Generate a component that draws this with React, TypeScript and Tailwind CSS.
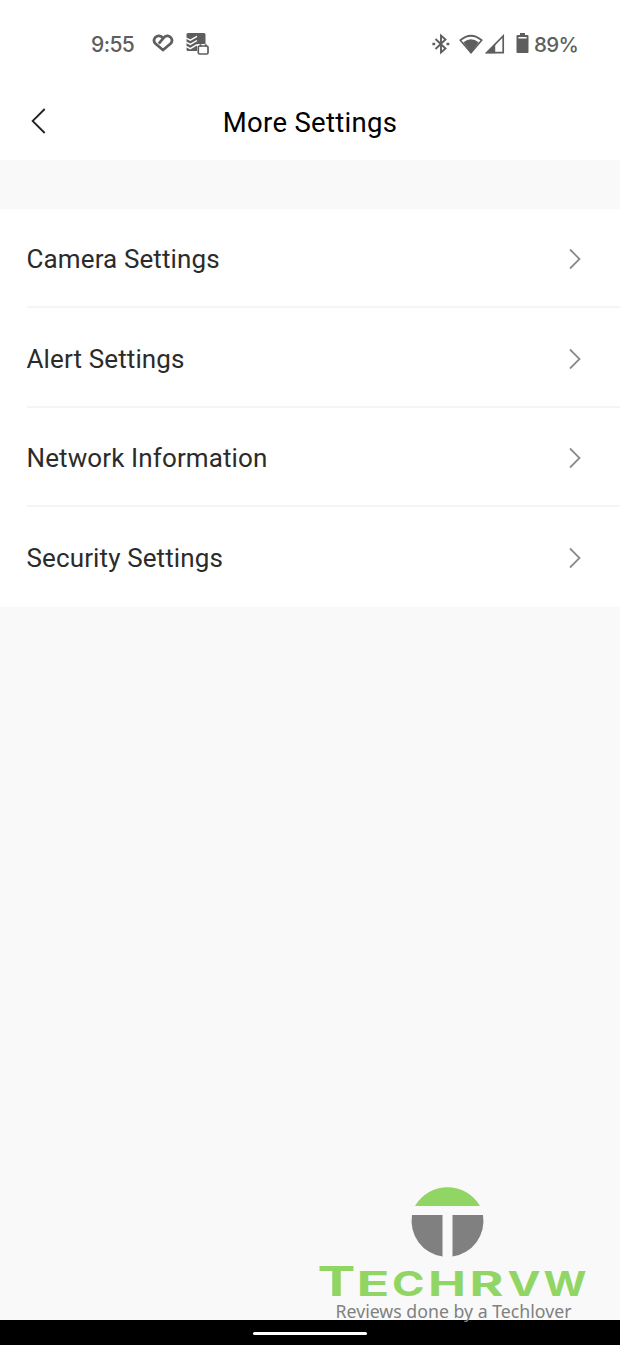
const rows = ["Camera Settings", "Alert Settings", "Network Information", "Security Settings"];

function StatusBar() {
    return (
        <div className="flex h-[86px] shrink-0 items-start justify-between pl-[91px] pr-[41px] pt-[31px] text-[#5e5e5e]">
            <div className="flex h-[27px] items-center">
                <span className="w-[61px] pt-px font-['Inter',sans-serif] text-[21px] font-medium tracking-[-0.6px]">9:55</span>
                {/* Heart with a check */}
                <svg className="mb-[3px] mr-[12px]" width="22" height="20" viewBox="0 0 22 20" fill="none" stroke="currentColor" strokeWidth="2.700">
                    <path d="M11 5C9 2.400 5.400 2.100 3.300 4.400c-1.900 2.200-1.500 4.500.3 6.300L11 17l7.400-6.300c1.800-1.800 2.200-4.100.3-6.300C16.600 2.100 13.800 2.500 12 4.400L6.800 10.600" />
                </svg>
                {/* Todo list with a badge */}
                <svg className="mb-px" width="24" height="24" viewBox="0 0 24 24">
                    <path fill="currentColor" d="M2 1h16a1.500 1.500 0 0 1 1.500 1.500V12H12v7H2a1.500 1.500 0 0 1-1.500-1.500v-15A1.500 1.500 0 0 1 2 1z" />
                    <path stroke="white" strokeWidth="1.400" fill="none" d="M0 6l4.300 2.200L11 4.300M0 10.200l4.300 2.200L11 8.500M0 14.400l4.300 2.200L11 12.700" />
                    <path d="M11 12.200h13V24H11z" fill="white" />
                    <rect x="12.300" y="14" width="9.700" height="8" rx="1.300" fill="white" stroke="currentColor" strokeWidth="1.700" />
                    <path d="M14.500 12.300v2.500M19.800 12.300v2.500" stroke="currentColor" strokeWidth="1.700" />
                </svg>
            </div>
            <div className="flex h-[27px] items-center">
                <svg className="mb-[2px] mr-[9px]" width="18" height="22" viewBox="0 0 18 22" fill="none" stroke="currentColor" strokeWidth="1.900">
                    <path d="M3.500 6l10 9.500-4.500 4V2.500l4.500 4-10 9.500" />
                    <path d="M.4 11h2.800M14.500 11h2.800" strokeWidth="2.400" />
                </svg>
                <svg className="mb-[2px] mr-[2px]" width="24" height="20" viewBox="0 0 24 20">
                    <path d="M1.300 6.200Q12-2.700 22.700 6.200L12 18.600z" fill="none" stroke="currentColor" strokeWidth="1.700" />
                    <path d="M4.400 8.300Q12 2.400 19.600 8.300L12 18.600z" fill="currentColor" />
                </svg>
                <svg className="mb-[2px] mr-[11px]" width="20" height="20" viewBox="0 0 20 20">
                    <path d="M1.800 18.600L18.200 2v16.600z" fill="none" stroke="currentColor" strokeWidth="1.700" />
                    <path d="M1 19.200L10.200 9.600v9.600z" fill="currentColor" />
                </svg>
                <svg className="mb-[3px] mr-[5px]" width="13" height="22" viewBox="0 0 13 22">
                    <path fill="currentColor" fillRule="evenodd" d="M4 1h5v2h2.500a1 1 0 0 1 1 1v16a1 1 0 0 1-1 1h-10a1 1 0 0 1-1-1V4a1 1 0 0 1 1-1H4zM2.400 5v1.400h8.200V5z" />
                </svg>
                <span className="w-[45px] whitespace-nowrap pt-[2px] font-['Inter',sans-serif] text-[20.5px] font-medium tracking-[-0.6px]">89%</span>
            </div>
        </div>
    );
}

function Watermark() {
    return (
        <svg className="absolute left-[310px] top-[1175px]" width="290" height="150" viewBox="0 0 290 150" role="img">
            <path fill="#91d565" d="M105 31A37.500 37.500 0 0 1 170 31z" />
            <path fill="#808080" d="M102 40h30.500v41.500A36 36 0 0 1 102 40zM142.500 40h30.500a36 36 0 0 1-30.500 41.500z" />
            <text y="121" fill="#91d565" fontFamily="Inter, sans-serif" fontWeight="700" fontSize="33.500">
                <tspan x="7.500" fontSize="41" textLength="38" lengthAdjust="spacingAndGlyphs">T</tspan>
                <tspan x="46.500" textLength="33" lengthAdjust="spacingAndGlyphs">E</tspan>
                <tspan x="82" textLength="32.500" lengthAdjust="spacingAndGlyphs">C</tspan>
                <tspan x="118" textLength="38" lengthAdjust="spacingAndGlyphs">H</tspan>
                <tspan x="159.500" textLength="34" lengthAdjust="spacingAndGlyphs">R</tspan>
                <tspan x="197.500" textLength="33" lengthAdjust="spacingAndGlyphs">V</tspan>
                <tspan x="233.500" textLength="43" lengthAdjust="spacingAndGlyphs">W</tspan>
            </text>
            <text x="25.500" y="143" fill="#808080" fontFamily="Noto Sans, sans-serif" fontSize="17.500" textLength="236" lengthAdjust="spacingAndGlyphs">
                Reviews done by a Techlover
            </text>
        </svg>
    );
}

export default function App() {
    return (
        <div className="relative flex h-[1345px] w-[620px] flex-col overflow-hidden bg-[#f9f9f9] font-['Roboto',sans-serif]">
            {/* Header */}
            <header className="flex h-[160px] flex-col bg-white">
                <StatusBar />
                <div className="grid h-[73px] grid-cols-[160px_1fr_160px] items-center">
                    <svg className="mb-[3px] ml-[30px]" width="17" height="26" viewBox="0 0 17 26" fill="none" stroke="#222" strokeWidth="1.800">
                        <path d="M14.700 1L2.600 13l12.100 12" />
                    </svg>
                    <h1 className="text-center text-[27.5px] tracking-[0.3px] text-black">More Settings</h1>
                </div>
            </header>

            {/* Settings list */}
            <ul className="mt-[49px] bg-white pl-[27px]">
                {rows.map((row) => (
                    <li key={row} className="flex h-[99.400px] items-center justify-between border-b-2 border-[#f5f5f5] pr-[38px] pt-[3px] last:border-0 last:pt-[2px]">
                        <span className="-ml-[0.5px] pt-px text-[26px] tracking-[0.120px] text-[#2b2b2b]">{row}</span>
                        <svg width="14" height="22" viewBox="0 0 14 22" fill="none" stroke="#8c8c8c" strokeWidth="1.800">
                            <path d="M2 1.500L11.500 11 2 20.500" />
                        </svg>
                    </li>
                ))}
            </ul>

            {/* Navigation bar */}
            <div className="mt-auto flex h-[25px] justify-center bg-black pt-[12px]">
                <div className="h-[3px] w-[114px] rounded-full bg-white" />
            </div>

            <Watermark />
        </div>
    );
}
